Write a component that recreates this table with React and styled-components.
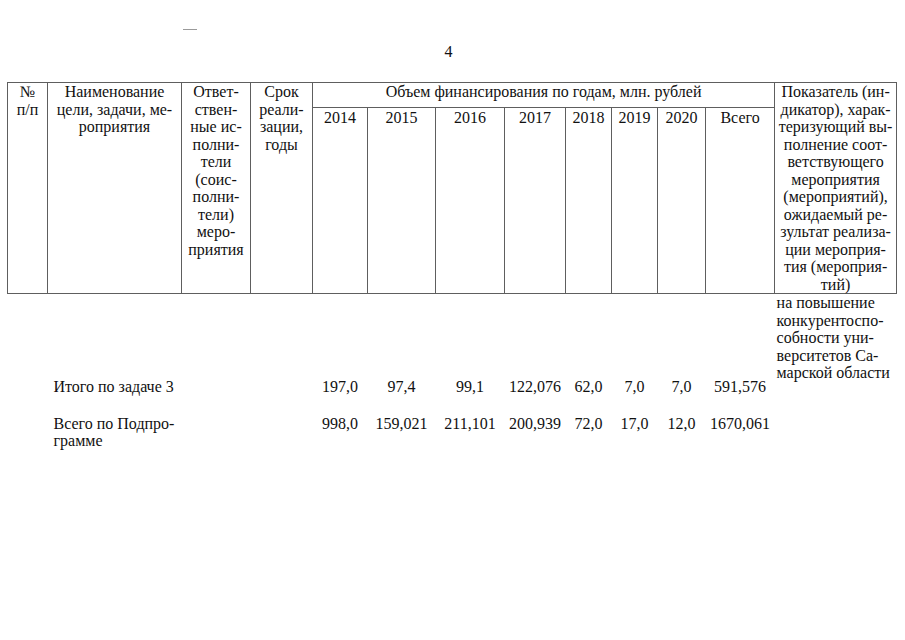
import React from "react";
import styled, { createGlobalStyle } from "styled-components";

const serif = `"Liberation Serif", "Times New Roman", "DejaVu Serif", serif`;

const GlobalStyle = createGlobalStyle`
  html, body {
    margin: 0;
    padding: 0;
    background: #ffffff;
  }
  body {
    font-family: ${serif};
    color: #111111;
  }
`;

const Page = styled.div`
  width: 905px;
  height: 640px;
  background: #ffffff;
  overflow: hidden;
  font-family: ${serif};
`;

const ScanMark = styled.div`
  width: 14px;
  height: 1px;
  margin: 29px 0 0 183px;
  background: #9a9a9a;
`;

const PageNumber = styled.div`
  height: 18px;
  margin-top: 13px;
  text-align: center;
  font-size: 16px;
  line-height: 18px;
  padding-right: 8px;
`;

const Table = styled.table`
  margin: 21px 0 0 7px;
  width: 889px;
  table-layout: fixed;
  border-collapse: collapse;
  font-family: ${serif};
  font-size: 16px;
  line-height: 17.5px;
  color: #111111;
`;

const HeadCell = styled.th`
  font-family: ${serif};
  font-weight: normal;
  text-align: center;
  vertical-align: top;
  padding: ${p => (p.$year ? "1px 0 0" : "0")};
  border: 1px solid #5e5e5e;
  white-space: nowrap;
`;

const BodyCell = styled.td`
  font-family: ${serif};
  padding: ${p => p.$pad || "0"};
  text-align: ${p => (p.$left ? "left" : "center")};
  vertical-align: ${p => (p.$top ? "top" : "bottom")};
  white-space: nowrap;
`;

const Lines = ({ children }) =>
  children.split("\n").map((l, i) => <div key={i}>{l}</div>);

const widths = [40, 134, 69, 62, 55, 68, 69, 61, 46, 46, 48, 69, 122];
const years = ["2014", "2015", "2016", "2017", "2018", "2019", "2020", "Всего"];

const rows = [
  {
    name: "Итого по задаче 3",
    values: ["197,0", "97,4", "99,1", "122,076", "62,0", "7,0", "7,0", "591,576"],
    note: "на повышение\nконкурентоспо-\nсобности уни-\nверситетов Са-\nмарской области",
  },
  {
    name: "Всего по Подпро-\nграмме",
    values: ["998,0", "159,021", "211,101", "200,939", "72,0", "17,0", "12,0", "1670,061"],
  },
];

export default function App() {
  return (
    <Page>
      <GlobalStyle />
      <ScanMark />
      <PageNumber>4</PageNumber>
      <Table>
        <colgroup>
          {widths.map((w, i) => (
            <col key={i} style={{ width: w }} />
          ))}
        </colgroup>
        <thead>
          <tr style={{ height: 25 }}>
            <HeadCell rowSpan={2}>
              <Lines>{"№\nп/п"}</Lines>
            </HeadCell>
            <HeadCell rowSpan={2}>
              <Lines>{"Наименование\nцели, задачи, ме-\nроприятия"}</Lines>
            </HeadCell>
            <HeadCell rowSpan={2}>
              <Lines>
                {"Ответ-\nствен-\nные ис-\nполни-\nтели\n(соис-\nполни-\nтели)\nмеро-\nприятия"}
              </Lines>
            </HeadCell>
            <HeadCell rowSpan={2}>
              <Lines>{"Срок\nреали-\nзации,\nгоды"}</Lines>
            </HeadCell>
            <HeadCell colSpan={8}>Объем финансирования по годам, млн. рублей</HeadCell>
            <HeadCell rowSpan={2}>
              <Lines>
                {"Показатель (ин-\nдикатор), харак-\nтеризующий вы-\nполнение соот-\nветствующего\nмероприятия\n(мероприятий),\nожидаемый ре-\nзультат реализа-\nции мероприя-\nтия (мероприя-\nтий)"}
              </Lines>
            </HeadCell>
          </tr>
          <tr style={{ height: 185 }}>
            {years.map(y => (
              <HeadCell key={y} $year>
                {y}
              </HeadCell>
            ))}
          </tr>
        </thead>
        <tbody>
          {rows.map((r, i) => (
            <tr key={i}>
              <BodyCell />
              <BodyCell $left $top={i > 0} $pad={i > 0 ? "19px 0 0 6px" : "0 0 0 6px"}>
                <Lines>{r.name}</Lines>
              </BodyCell>
              <BodyCell />
              <BodyCell />
              {r.values.map((v, j) => (
                <BodyCell key={j} $top={i > 0} $pad={i > 0 ? "19px 0 0" : "0"}>
                  {v}
                </BodyCell>
              ))}
              <BodyCell $left $top $pad={r.note ? "0 0 14px 2px" : "0"}>
                {r.note && <Lines>{r.note}</Lines>}
              </BodyCell>
            </tr>
          ))}
        </tbody>
      </Table>
    </Page>
  );
}
